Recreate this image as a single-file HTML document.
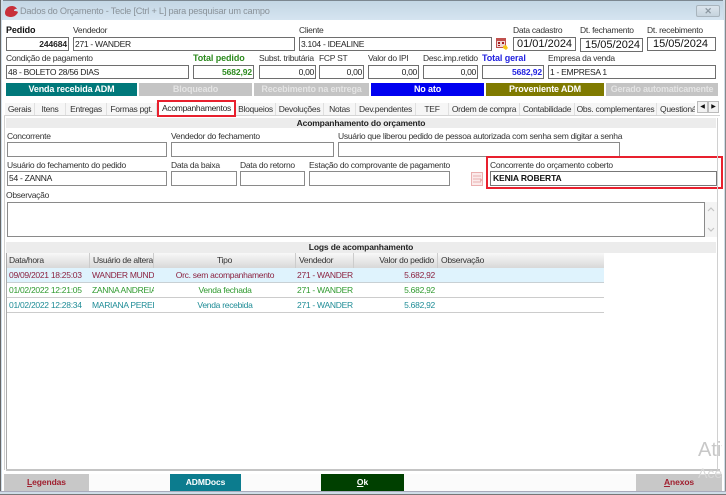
<!DOCTYPE html>
<html><head><meta charset="utf-8">
<style>
html,body{margin:0;padding:0;background:#fff}
#w{position:relative;width:726px;height:495px;overflow:hidden;background:#fff;font-family:"Liberation Sans",sans-serif;font-size:8.5px;letter-spacing:-.28px;color:#222;filter:blur(.25px)}
#w div{position:absolute;box-sizing:border-box;white-space:nowrap}
.l{line-height:11px;height:11px;color:#333}
.b{font-weight:bold;font-size:9px;letter-spacing:-.1px}
.i{background:#fff;border:1px solid #6e6e6e;line-height:12px;padding:0 1px;color:#222;overflow:hidden}
.d{font-size:11px;letter-spacing:0;color:#111}
.r{text-align:right}
.s{color:#fff;font-weight:bold;text-align:center;line-height:13px;height:13px;top:83px;font-size:9px;letter-spacing:-.15px;overflow:hidden}
.t{top:103px;height:12px;line-height:12px;color:#333;background:#f6f6f6;text-align:center;border-right:1px solid #e0e0e0}
.h{background:#ececec;font-weight:bold;text-align:center;color:#222;line-height:10px;letter-spacing:-.15px}
.gh{top:253px;height:15px;line-height:14px;background:linear-gradient(#f8f8f8,#d8d8d8);border-right:1px solid #ccc;padding:0 3px;color:#333;overflow:hidden}
.c{height:13px;line-height:13px;overflow:hidden}
.rr{color:#8b2240}.rg{color:#2f9a2f}.rb{color:#1e8c96}
.f{font-weight:bold;font-size:8.5px;letter-spacing:-.1px;text-align:center;line-height:16px;height:17px;top:474px}
</style></head><body>
<div id="w">
<!-- title -->
<div style="left:0;top:0;width:726px;height:21px;background:linear-gradient(#c3d6e4,#d6e5f1)"></div>
<div style="left:0;top:0;width:726px;height:1px;background:#7c8790"></div>
<div style="left:0;top:0;width:3px;height:495px;background:#cfdde8;border-left:1px solid #666"></div>
<div style="left:723px;top:0;width:3px;height:495px;background:#cfdde8;border-right:1px solid #888"></div>
<div style="left:2px;top:20px;width:722px;height:472px;background:#fff"></div>
<svg style="position:absolute;left:5px;top:6px" width="13" height="12" viewBox="0 0 13 12"><path d="M0 7C0 3 3 0 7 0c2 0 4 1 5 3-2-.5-3 .5-3 2 1 0 3 0 4 1-1 3-4 5-7 5-3 0-6-1-6-4z" fill="#c8303a"/></svg>
<div style="left:20px;top:5px;font-size:9.2px;letter-spacing:-.22px;line-height:13px;color:#8a9299">Dados do Orçamento - Tecle [Ctrl + L] para pesquisar um campo</div>
<div style="left:696px;top:5px;width:24px;height:12px;border:1px solid #a8b4bd;border-radius:2px;background:linear-gradient(#dbe5ed,#c6d3dd);text-align:center;line-height:10px;color:#8b97a1;font-weight:bold;font-size:9px">✕</div>

<!-- row 1 -->
<div class="l b" style="left:6px;top:25px;color:#111">Pedido</div>
<div class="i r" style="left:6px;top:37px;width:63px;height:14px;font-weight:bold;letter-spacing:-.1px">244684</div>
<div class="l" style="left:73px;top:25px">Vendedor</div>
<div class="i" style="left:73px;top:37px;width:222px;height:14px">271 - WANDER</div>
<div class="l" style="left:299px;top:25px">Cliente</div>
<div class="i" style="left:299px;top:37px;width:193px;height:14px">3.104 - IDEALINE</div>
<svg style="position:absolute;left:496px;top:38px" width="12" height="12" viewBox="0 0 12 12"><rect x="0" y="0" width="10" height="10" fill="#c0504d"/><rect x="1" y="3" width="8" height="6" fill="#f0d8d8"/><path d="M2 4h2v2H2zM6 4h2v2H6zM2 7h2v1H2z" fill="#a02020"/><path d="M7 8l3-1 2 3-2 2-3-2z" fill="#f5c518"/></svg>
<div class="l" style="left:513px;top:25px">Data cadastro</div>
<div class="i d" style="left:513px;top:37px;width:63px;height:14px;padding:0 3px">01/01/2024</div>
<div class="l" style="left:580px;top:25px">Dt. fechamento</div>
<div class="i d" style="left:580px;top:38px;width:63px;height:14px;padding:0 4px">15/05/2024</div>
<div class="l" style="left:647px;top:25px">Dt. recebimento</div>
<div class="i d" style="left:647px;top:37px;width:69px;height:14px;padding:0 5px">15/05/2024</div>

<!-- row 2 -->
<div class="l" style="left:6px;top:53px">Condição de pagamento</div>
<div class="i" style="left:6px;top:65px;width:183px;height:14px">48 - BOLETO 28/56 DIAS</div>
<div class="l b" style="left:193px;top:53px;color:#2c8a1e">Total pedido</div>
<div class="i r" style="left:193px;top:65px;width:61px;height:14px;font-weight:bold;letter-spacing:-.1px;color:#2c8a1e">5682,92</div>
<div class="l" style="left:259px;top:53px">Subst. tributária</div>
<div class="i r" style="left:259px;top:65px;width:57px;height:14px">0,00</div>
<div class="l" style="left:319px;top:53px">FCP ST</div>
<div class="i r" style="left:319px;top:65px;width:45px;height:14px">0,00</div>
<div class="l" style="left:368px;top:53px">Valor do IPI</div>
<div class="i r" style="left:368px;top:65px;width:51px;height:14px">0,00</div>
<div class="l" style="left:423px;top:53px">Desc.imp.retido</div>
<div class="i r" style="left:423px;top:65px;width:55px;height:14px">0,00</div>
<div class="l b" style="left:482px;top:53px;color:#2222e0">Total geral</div>
<div class="i r" style="left:482px;top:65px;width:62px;height:14px;font-weight:bold;letter-spacing:-.1px;color:#2222e0">5682,92</div>
<div class="l" style="left:548px;top:53px">Empresa da venda</div>
<div class="i" style="left:548px;top:65px;width:168px;height:14px">1 - EMPRESA 1</div>

<!-- status -->
<div class="s" style="left:6px;width:131px;background:#00787a">Venda recebida ADM</div>
<div class="s" style="left:139px;width:113px;background:#c4c4c4;color:#e4e4e4">Bloqueado</div>
<div class="s" style="left:254px;width:115px;background:#c4c4c4;color:#e4e4e4;letter-spacing:-.2px">Recebimento na entrega</div>
<div class="s" style="left:371px;width:113px;background:#0000f0">No ato</div>
<div class="s" style="left:486px;width:118px;background:#7f7a00">Proveniente ADM</div>
<div class="s" style="left:606px;width:112px;background:#c4c4c4;color:#e4e4e4;letter-spacing:-.25px">Gerado automaticamente</div>

<!-- tabs -->
<div style="left:4px;top:115px;width:716px;height:1px;background:#d4d4d4"></div>
<div class="t" style="left:5px;width:30px">Gerais</div>
<div class="t" style="left:35px;width:31px">Itens</div>
<div class="t" style="left:66px;width:41px">Entregas</div>
<div class="t" style="left:107px;width:50px">Formas pgt.</div>
<div class="t" style="left:236px;width:40px">Bloqueios</div>
<div class="t" style="left:276px;width:48px">Devoluções</div>
<div class="t" style="left:324px;width:32px">Notas</div>
<div class="t" style="left:356px;width:60px">Dev.pendentes</div>
<div class="t" style="left:416px;width:33px">TEF</div>
<div class="t" style="left:449px;width:71px">Ordem de compra</div>
<div class="t" style="left:520px;width:55px">Contabilidade</div>
<div class="t" style="left:575px;width:82px">Obs. complementares</div>
<div class="t" style="left:657px;width:38px;border:0;overflow:hidden;text-align:left;padding-left:3px">Questionário</div>
<div style="left:697px;top:101px;width:11px;height:12px;border:1px solid #bbb;background:#f2f2f2;font-size:6px;line-height:10px;text-align:center;color:#111;letter-spacing:0">◀</div>
<div style="left:708px;top:101px;width:11px;height:12px;border:1px solid #bbb;background:#f2f2f2;font-size:6px;line-height:10px;text-align:center;color:#111;letter-spacing:0">▶</div>
<div style="left:157px;top:100px;width:79px;height:17px;border:2px solid #e8202e;background:#fff;text-align:center;line-height:12px;color:#222">Acompanhamentos</div>

<!-- panel -->
<div class="h" style="left:6px;top:118px;width:710px;height:10px">Acompanhamento do orçamento</div>
<div class="l" style="left:7px;top:131px">Concorrente</div>
<div class="i" style="left:7px;top:142px;width:160px;height:15px;border-color:#8a8a8a"></div>
<div class="l" style="left:171px;top:131px">Vendedor do fechamento</div>
<div class="i" style="left:171px;top:142px;width:163px;height:15px;border-color:#8a8a8a"></div>
<div class="l" style="left:338px;top:131px">Usuário que liberou pedido de pessoa autorizada com senha sem digitar a senha</div>
<div class="i" style="left:338px;top:142px;width:282px;height:15px;border-color:#8a8a8a"></div>

<div class="l" style="left:7px;top:160px">Usuário do fechamento do pedido</div>
<div class="i" style="left:7px;top:171px;width:160px;height:15px;border-color:#8a8a8a">54 - ZANNA</div>
<div class="l" style="left:171px;top:160px">Data da baixa</div>
<div class="i" style="left:171px;top:171px;width:66px;height:15px;border-color:#8a8a8a"></div>
<div class="l" style="left:240px;top:160px">Data do retorno</div>
<div class="i" style="left:240px;top:171px;width:65px;height:15px;border-color:#8a8a8a"></div>
<div class="l" style="left:309px;top:160px">Estação do comprovante de pagamento</div>
<div class="i" style="left:309px;top:171px;width:141px;height:15px;border-color:#8a8a8a"></div>
<svg style="position:absolute;left:471px;top:172px" width="13" height="14" viewBox="0 0 13 14"><rect x=".5" y=".5" width="11" height="13" fill="#fbeaea" stroke="#eab0b0"/><path d="M2 4h8M2 7h8M2 10h8" stroke="#eab0b0"/><path d="M9 6l3 2-3 2z" fill="#eab0b0"/></svg>

<div style="left:486px;top:156px;width:237px;height:33px;border:2px solid #e8202e"></div>
<div class="l" style="left:490px;top:160px">Concorrente do orçamento coberto</div>
<div class="i" style="left:490px;top:171px;width:227px;height:15px;border-color:#777;font-weight:bold;color:#111;padding:0 2px;font-size:8.5px;letter-spacing:-.1px">KENIA ROBERTA</div>

<div class="l" style="left:6px;top:190px">Observação</div>
<div class="i" style="left:7px;top:202px;width:698px;height:35px;border-color:#8a8a8a"></div>
<div style="left:705px;top:202px;width:12px;height:35px;background:#f4f4f4"></div>
<svg style="position:absolute;left:706px;top:205px" width="10" height="30" viewBox="0 0 10 30"><path d="M2 6l3-3 3 3M2 23l3 3 3-3" fill="none" stroke="#c4c4c4" stroke-width="1.2"/></svg>

<div class="h" style="left:6px;top:242px;width:710px;height:11px">Logs de acompanhamento</div>

<!-- grid -->
<div class="gh" style="left:6px;width:84px">Data/hora</div>
<div class="gh" style="left:90px;width:64px">Usuário de alteraç</div>
<div class="gh" style="left:154px;width:142px;text-align:center">Tipo</div>
<div class="gh" style="left:296px;width:58px">Vendedor</div>
<div class="gh r" style="left:354px;width:84px">Valor do pedido</div>
<div class="gh" style="left:438px;width:166px;border:0">Observação</div>

<div style="left:6px;top:268px;width:598px;height:15px;background:#dff3fd;border-bottom:1px solid #c8d0d4"></div>
<div style="left:6px;top:283px;width:598px;height:15px;border-bottom:1px solid #ccc"></div>
<div style="left:6px;top:298px;width:598px;height:15px;border-bottom:1px solid #ccc"></div>

<div class="c rr" style="left:9px;top:269px;width:81px">09/09/2021 18:25:03</div>
<div class="c rr" style="left:92px;top:269px;width:62px">WANDER MUNDIM</div>
<div class="c rr" style="left:154px;top:269px;width:142px;text-align:center">Orc. sem acompanhamento</div>
<div class="c rr" style="left:297px;top:269px;width:56px">271 - WANDER M</div>
<div class="c rr r" style="left:354px;top:269px;width:81px">5.682,92</div>

<div class="c rg" style="left:9px;top:284px;width:81px">01/02/2022 12:21:05</div>
<div class="c rg" style="left:92px;top:284px;width:62px">ZANNA ANDREIA</div>
<div class="c rg" style="left:154px;top:284px;width:142px;text-align:center">Venda fechada</div>
<div class="c rg" style="left:297px;top:284px;width:56px">271 - WANDER M</div>
<div class="c rg r" style="left:354px;top:284px;width:81px">5.682,92</div>

<div class="c rb" style="left:9px;top:299px;width:81px">01/02/2022 12:28:34</div>
<div class="c rb" style="left:92px;top:299px;width:62px">MARIANA PEREIRA</div>
<div class="c rb" style="left:154px;top:299px;width:142px;text-align:center">Venda recebida</div>
<div class="c rb" style="left:297px;top:299px;width:56px">271 - WANDER M</div>
<div class="c rb r" style="left:354px;top:299px;width:81px">5.682,92</div>

<!-- panel frame -->
<div style="left:6px;top:253px;width:1px;height:217px;background:#aaa"></div>
<div style="left:6px;top:469px;width:714px;height:2px;background:#c4c4c4"></div>
<div style="left:717px;top:118px;width:1px;height:352px;background:#d0d0d0"></div>
<div style="left:4px;top:116px;width:1px;height:354px;background:#d0d0d0"></div>

<!-- bottom -->
<div style="left:4px;top:474px;width:718px;height:17px;background:#fbfbfb"></div>
<div class="f" style="left:4px;width:85px;background:#c8c8c8;color:#a02030"><u>L</u>egendas</div>
<div class="f" style="left:170px;width:71px;background:#0c7c8e;color:#fff">ADMDocs</div>
<div class="f" style="left:321px;width:83px;background:#004000;color:#fff"><u>O</u>k</div>
<div class="f" style="left:636px;width:86px;background:#c8c8c8;color:#a02030"><u>A</u>nexos</div>
<div style="left:0;top:491px;width:726px;height:4px;background:#cfdde8;border-top:1px solid #aab;border-bottom:1px solid #777"></div>

<!-- watermark -->
<div style="left:698px;top:439px;font-size:20px;letter-spacing:0;line-height:23px;color:#c8c8c8;width:24px;overflow:hidden">Ativar</div>
<div style="left:698px;top:465px;font-size:14px;letter-spacing:0;line-height:16px;color:#d8d8d8;width:24px;overflow:hidden">Acesse</div>
</div>
</body></html>
